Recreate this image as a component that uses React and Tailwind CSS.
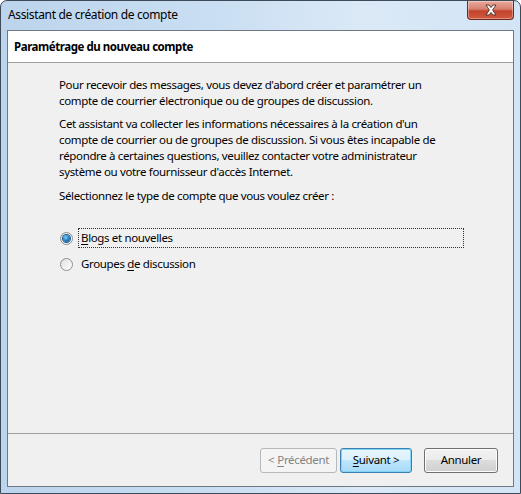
import React from "react";

function Radio({ checked }) {
  return (
    <span className="relative inline-flex h-[13px] w-[13px] shrink-0 items-center justify-center rounded-full border border-[#8f8f8f] bg-[linear-gradient(135deg,#e0e0e0,#ffffff)]">
      {checked && (
        <span className="h-[7px] w-[7px] rounded-full bg-[radial-gradient(circle_at_40%_35%,#7ed0f7,#1a6fb4_60%,#0d4e8a)] ring-1 ring-[#1d5b8f]" />
      )}
    </span>
  );
}

function CloseButton() {
  return (
    <div className="flex h-[19px] w-[47px] items-center justify-center rounded-b-[4px] border border-t-0 border-[#6b2a1f] bg-[linear-gradient(to_bottom,#e9a99b_0%,#d7816f_45%,#c3432c_55%,#d0583f_100%)] shadow-[inset_0_0_0_1px_rgba(255,255,255,0.35)]">
      <svg width="14" height="12" viewBox="0 0 14 12">
        <path
          d="M2 1 L5 1 L7 3.6 L9 1 L12 1 L8.6 6 L12 11 L9 11 L7 8.4 L5 11 L2 11 L5.4 6 Z"
          fill="#ffffff"
          stroke="#4a2b27"
          strokeWidth="0.9"
          strokeLinejoin="round"
        />
      </svg>
    </div>
  );
}

export default function App() {
  return (
    <div
      className="flex h-[494px] w-[521px] flex-col rounded-t-[7px] border border-[#3d4a59] bg-[linear-gradient(to_right,#bcd4ec_0%,#c9def2_40%,#dbe9f7_70%,#d2e4f5_100%)] px-[6px] pb-[6px] text-[11.5px] tracking-[-0.35px] text-black"
      style={{ fontFamily: '"Noto Sans", "Open Sans", sans-serif' }}
    >
      <div className="flex h-[29px] shrink-0 items-start justify-between">
        <div className="pl-[1px] pt-[6px] text-[12px] leading-[16px]">Assistant de création de compte</div>
        <CloseButton />
      </div>
      <div className="flex flex-1 flex-col border border-[#6f7882] bg-[#f0f0f0]">
        <div className="flex h-[32px] shrink-0 items-center border-b border-[#a0a0a0] bg-white pl-[6px] font-bold tracking-[-0.45px]">
          Paramétrage du nouveau compte
        </div>
        <div className="flex flex-1 flex-col pl-[51px] pr-[20px] pt-[14px] leading-[16px]">
          <p>
            Pour recevoir des messages, vous devez d'abord créer et paramétrer un
            <br />
            compte de courrier électronique ou de groupes de discussion.
          </p>
          <p className="mt-[7px]">
            Cet assistant va collecter les informations nécessaires à la création d'un
            <br />
            compte de courrier ou de groupes de discussion. Si vous êtes incapable de
            <br />
            répondre à certaines questions, veuillez contacter votre administrateur
            <br />
            système ou votre fournisseur d'accès Internet.
          </p>
          <p className="mt-[8px]">Sélectionnez le type de compte que vous voulez créer :</p>
          <div className="mt-[24px] flex flex-col gap-[6px] pl-[1px]">
            <div className="flex items-center gap-[5px]">
              <Radio checked />
              <div className="flex h-[20px] w-[386px] items-center border border-dotted border-[#333] pl-[2px]">
                <span>
                  <span className="underline underline-offset-2">B</span>logs et nouvelles
                </span>
              </div>
            </div>
            <div className="flex items-center gap-[5px]">
              <Radio />
              <div className="flex h-[20px] items-center pl-[3px]">
                <span>
                  Groupes <span className="underline underline-offset-2">d</span>e discussion
                </span>
              </div>
            </div>
          </div>
        </div>
        <div className="flex h-[53px] shrink-0 items-center justify-end border-t border-[#a0a0a0] pr-[15px]">
          <button className="flex h-[25px] w-[77px] items-center justify-center rounded-[3px] border border-[#b5b9bc] bg-[#f4f4f4] text-[#838383]">
            &lt; <span className="ml-[3px] underline underline-offset-2">P</span>récédent
          </button>
          <button className="ml-[3px] flex h-[25px] w-[72px] items-center justify-center rounded-[3px] border border-[#3c7fb1] bg-[linear-gradient(to_bottom,#eaf6fd_0%,#d9f0fc_50%,#bee6fd_50%,#a7d9f5_100%)] shadow-[inset_0_0_0_1px_#7fd4f7]">
            <span className="underline underline-offset-2">S</span>uivant &gt;
          </button>
          <button className="ml-[12px] flex h-[25px] w-[74px] items-center justify-center rounded-[3px] border border-[#707070] bg-[linear-gradient(to_bottom,#f2f2f2_0%,#ebebeb_50%,#dddddd_50%,#cfcfcf_100%)] shadow-[inset_0_0_0_1px_#fcfcfc]">
            Annuler
          </button>
        </div>
      </div>
    </div>
  );
}
